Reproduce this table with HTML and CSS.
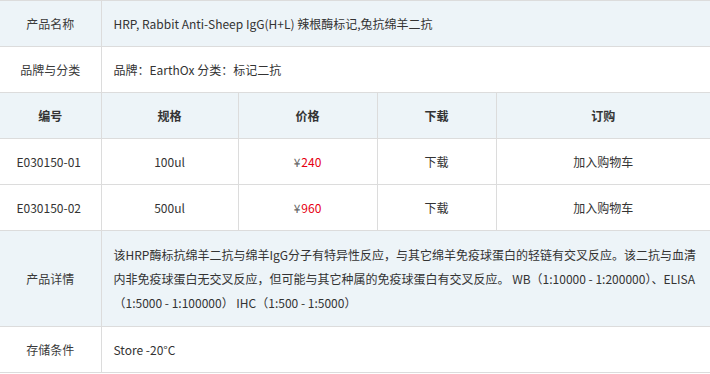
FILE: index.html
```html
<!DOCTYPE html>
<html lang="zh-CN">
<head>
<meta charset="utf-8">
<link rel="stylesheet" href="styles.css">
</head>
<body>
<table class="spec">
  <colgroup>
    <col class="c1"><col class="c2"><col class="c3"><col class="c4"><col class="c5">
  </colgroup>
  <tr class="shade">
    <td class="label">产品名称</td>
    <td class="value" colspan="4">HRP, Rabbit Anti-Sheep IgG(H+L) 辣根酶标记,兔抗绵羊二抗</td>
  </tr>
  <tr>
    <td class="label">品牌与分类</td>
    <td class="value" colspan="4">品牌：EarthOx 分类：标记二抗</td>
  </tr>
  <tr class="shade head">
    <th>编号</th><th>规格</th><th>价格</th><th>下载</th><th>订购</th>
  </tr>
  <tr class="item">
    <td>E030150-01</td><td>100ul</td><td><span class="yen">¥</span><span class="price">240</span></td><td>下载</td><td>加入购物车</td>
  </tr>
  <tr class="item">
    <td>E030150-02</td><td>500ul</td><td><span class="yen">¥</span><span class="price">960</span></td><td>下载</td><td>加入购物车</td>
  </tr>
  <tr class="shade detail">
    <td class="label">产品详情</td>
    <td class="value" colspan="4">该HRP酶标抗绵羊二抗与绵羊IgG分子有特异性反应，与其它绵羊免疫球蛋白的轻链有交叉反应。该二抗与血清内非免疫球蛋白无交叉反应，但可能与其它种属的免疫球蛋白有交叉反应。 WB（1:10000 - 1:200000）、ELISA（1:5000 - 1:100000） IHC（1:500 - 1:5000）</td>
  </tr>
  <tr>
    <td class="label">存储条件</td>
    <td class="value" colspan="4">Store -20°C</td>
  </tr>
</table>
</body>
</html>
```
FILE: styles.css
```css
html, body {
  margin: 0;
  padding: 0;
  background: #fff;
}
body {
  font-family: "Noto Sans CJK SC", "Noto Sans", sans-serif;
  font-size: 12px;
  color: #333;
}
.spec {
  width: 710px;
  border-collapse: collapse;
  table-layout: fixed;
}
.c1 { width: 101px; }
.c2 { width: 137px; }
.c3 { width: 139px; }
.c4 { width: 119px; }
.c5 { width: 214px; }
.spec td, .spec th {
  border-top: 1px solid #dcdcdc;
  border-bottom: 1px solid #dcdcdc;
  border-left: 1px solid #dcdcdc;
  height: 45px;
  padding: 0;
  vertical-align: middle;
  line-height: 20px;
}
.spec tr > :first-child { border-left: none; }
.shade { background: #edf4f8; }
.label {
  text-align: center;
  color: #3a3a3a;
}
.value {
  text-align: left;
  padding: 0 12px !important;
}
.head th {
  font-weight: bold;
  text-align: center;
  color: #333;
}
.item td { text-align: center; }
.item td:first-child { padding-right: 3px; }
.yen { color: #666; margin-right: 1px; }
.price { color: #e60012; }
.spec .detail td {
  height: auto;
  line-height: 24px;
}
.detail .value {
  padding: 12px 12px 11px 12px !important;
}
```
